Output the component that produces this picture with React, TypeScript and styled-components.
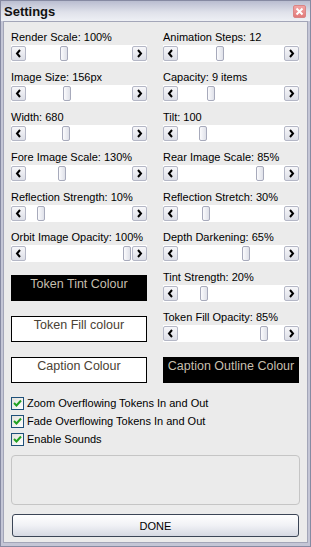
import { createGlobalStyle, styled } from "styled-components";

const GlobalStyle = createGlobalStyle`
  html, body {
    margin: 0;
    padding: 0;
    background: #ffffff;
  }
  body {
    font-family: "Liberation Sans", Arial, sans-serif;
    font-size: 11px;
    color: #000;
  }
`;

const Window = styled.div`
  width: 311px;
  height: 547px;
  box-sizing: border-box;
  display: flex;
  flex-direction: column;
  border: 1px solid #868aa2;
  background: #c4c6d6;
`;

const TitleBar = styled.div`
  height: 20px;
  display: flex;
  align-items: center;
  justify-content: space-between;
  padding: 0 4px 0 3px;
  background: linear-gradient(#b9bdd0, #dfe1ea 55%, #eef0f5);
`;

const Title = styled.span`
  font-weight: bold;
  font-size: 13px;
  color: #111;
`;

const CloseButton = styled.div`
  width: 13px;
  height: 13px;
  box-sizing: border-box;
  border: 1px solid #d98585;
  border-radius: 2px;
  background: linear-gradient(#f2a4a4, #e27a7a);
  display: flex;
  align-items: center;
  justify-content: center;
`;

const Body = styled.div`
  flex: 1;
  margin: 0 2px 3px;
  background: #ebebeb;
  border: 1px solid #a3a6b8;
  padding: 8px 6px 0 7px;
  display: flex;
  flex-direction: column;
`;

const Columns = styled.div`
  display: grid;
  grid-template-columns: 136px 136px;
  column-gap: 16px;
`;

const Column = styled.div`
  display: flex;
  flex-direction: column;
  gap: 8px;
`;

const SliderBlock = styled.div`
  display: flex;
  flex-direction: column;
  gap: 1px;
`;

const Label = styled.div`
  line-height: 14px;
  white-space: nowrap;
`;

const ScrollBar = styled.div`
  height: 17px;
  display: flex;
  background: #ffffff;
`;

const ArrowButton = styled.div`
  width: 15px;
  height: 15px;
  margin: 1px 0;
  box-sizing: border-box;
  border: 1px solid #b4b7c6;
  border-radius: 2px;
  background: linear-gradient(#f7f7fa, #dcdee6);
  display: flex;
  align-items: center;
  justify-content: center;
`;

const Track = styled.div`
  flex: 1;
  display: flex;
  padding: 0 1px;
`;

const Thumb = styled.div`
  width: 8px;
  height: 15px;
  margin-top: 1px;
  box-sizing: border-box;
  border: 1px solid #a7aabb;
  border-radius: 2px;
  background: linear-gradient(90deg, #fbfbfd, #dfe1e9);
`;

const ColourGroup = styled.div<{ $top: number }>`
  display: flex;
  flex-direction: column;
  gap: 15px;
  margin-top: ${(p) => p.$top}px;
`;

const Swatch = styled.div<{ $dark?: boolean }>`
  height: 26px;
  box-sizing: border-box;
  border: 1px solid #000;
  background: ${(p) => (p.$dark ? "#000" : "#fff")};
  color: ${(p) => (p.$dark ? "#c6bfae" : "#4a4234")};
  font-size: 12.5px;
  line-height: 15px;
  text-align: center;
  padding-top: 1px;
  white-space: nowrap;
`;

const CheckList = styled.div`
  margin-top: 14px;
  display: flex;
  flex-direction: column;
  gap: 5px;
`;

const CheckRow = styled.label`
  display: flex;
  align-items: center;
  gap: 3px;
  line-height: 13px;
`;

const CheckBox = styled.span`
  width: 13px;
  height: 13px;
  box-sizing: border-box;
  border: 1px solid #1e5079;
  background: linear-gradient(135deg, #e2e2dc, #ffffff);
  display: flex;
  align-items: center;
  justify-content: center;
`;

const GroupBox = styled.div`
  margin: 9px 0 0;
  height: 50px;
  width: 289px;
  box-sizing: border-box;
  border: 1px solid #c5c5c5;
  border-radius: 4px;
`;

const DoneButton = styled.button`
  margin: 9px 0 0 1px;
  width: 287px;
  height: 23px;
  box-sizing: border-box;
  border: 1px solid #3b4556;
  border-radius: 3px;
  background: linear-gradient(#ffffff, #f0f1f5 50%, #d6d9e3);
  font-family: "Liberation Sans", Arial, sans-serif;
  font-size: 11px;
  color: #000;
  padding: 0;
`;

const Arrow = ({ dir }: { dir: "left" | "right" }) => (
  <svg width="7" height="9" viewBox="0 0 7 9">
    <polyline
      points={dir === "left" ? "5,1 2,4.5 5,8" : "2,1 5,4.5 2,8"}
      fill="none"
      stroke="#000"
      strokeWidth="2"
    />
  </svg>
);

const Slider = ({ label, value }: { label: string; value: number }) => (
  <SliderBlock>
    <Label>{label}</Label>
    <ScrollBar>
      <ArrowButton>
        <Arrow dir="left" />
      </ArrowButton>
      <Track>
        <Thumb style={{ marginLeft: `calc(${value * 100}% - ${value * 8}px)` }} />
      </Track>
      <ArrowButton>
        <Arrow dir="right" />
      </ArrowButton>
    </ScrollBar>
  </SliderBlock>
);

const Check = ({ text }: { text: string }) => (
  <CheckRow>
    <CheckBox>
      <svg width="9" height="9" viewBox="0 0 9 9">
        <polyline points="1,4 3.5,6.5 8,1.5" fill="none" stroke="#21a121" strokeWidth="2" />
      </svg>
    </CheckBox>
    {text}
  </CheckRow>
);

const leftSliders: [string, number][] = [
  ["Render Scale: 100%", 0.34],
  ["Image Size: 156px", 0.38],
  ["Width: 680", 0.36],
  ["Fore Image Scale: 130%", 0.32],
  ["Reflection Strength: 10%", 0.1],
  ["Orbit Image Opacity: 100%", 1],
];

const rightSliders: [string, number][] = [
  ["Animation Steps: 12", 0.39],
  ["Capacity: 9 items", 0.29],
  ["Tilt: 100", 0.21],
  ["Rear Image Scale: 85%", 0.8],
  ["Reflection Stretch: 30%", 0.24],
  ["Depth Darkening: 65%", 0.66],
  ["Tint Strength: 20%", 0.22],
  ["Token Fill Opacity: 85%", 0.84],
];

export default function App() {
  return (
    <>
      <GlobalStyle />
      <Window>
        <TitleBar>
          <Title>Settings</Title>
          <CloseButton>
            <svg width="9" height="9" viewBox="0 0 9 9">
              <path d="M1.5 1.5 L7.5 7.5 M7.5 1.5 L1.5 7.5" stroke="#fff" strokeWidth="2" />
            </svg>
          </CloseButton>
        </TitleBar>
        <Body>
          <Columns>
            <Column>
              {leftSliders.map(([l, v]) => (
                <Slider key={l} label={l} value={v} />
              ))}
              <ColourGroup $top={5}>
                <Swatch $dark>Token Tint Colour</Swatch>
                <Swatch>Token Fill colour</Swatch>
                <Swatch>Caption Colour</Swatch>
              </ColourGroup>
            </Column>
            <Column>
              {rightSliders.map(([l, v]) => (
                <Slider key={l} label={l} value={v} />
              ))}
              <ColourGroup $top={7}>
                <Swatch $dark>Caption Outline Colour</Swatch>
              </ColourGroup>
            </Column>
          </Columns>
          <CheckList>
            <Check text="Zoom Overflowing Tokens In and Out" />
            <Check text="Fade Overflowing Tokens In and Out" />
            <Check text="Enable Sounds" />
          </CheckList>
          <GroupBox />
          <DoneButton>DONE</DoneButton>
        </Body>
      </Window>
    </>
  );
}
